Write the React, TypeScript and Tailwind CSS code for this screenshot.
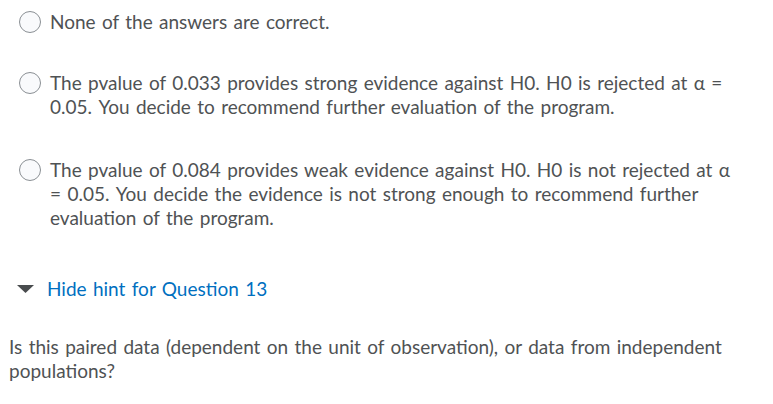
const font = { fontFamily: "Lato, 'Open Sans', sans-serif" };

function Radio() {
  return (
    <span className="mt-[1px] h-[22px] w-[22px] shrink-0 rounded-full border border-[#8a8f94] bg-[#f9fafc]" />
  );
}

function Option({ children, className = '' }: { children: React.ReactNode; className?: string }) {
  return (
    <div className={`flex items-start gap-[9px] pl-[19px] ${className}`}>
      <Radio />
      <p className="w-[685px] text-[19px] leading-[24px] text-[#4f5254] [word-spacing:1.5px]">
        {children}
      </p>
    </div>
  );
}

export default function App() {
  return (
    <div style={font} className="h-[404px] w-[773px] overflow-hidden bg-white pt-[10px]">
      <Option>None of the answers are correct.</Option>
      <Option className="mt-[37px]">
        The pvalue of 0.033 provides strong evidence against H0. H0 is rejected at α = 0.05. You
        decide to recommend further evaluation of the program.
      </Option>
      <Option className="mt-[39px]">
        The pvalue of 0.084 provides weak evidence against H0. H0 is not rejected at α = 0.05. You
        decide the evidence is not strong enough to recommend further evaluation of the program.
      </Option>

      <button className="mt-[47px] flex items-center gap-[13px] pl-[17px] text-[19px] leading-[24px] text-[#006fbf] [word-spacing:1.5px]">
        <svg width="17" height="8" viewBox="0 0 17 8">
          <path d="M0 0 H17 L8.5 8 Z" fill="#494c4e" />
        </svg>
        Hide hint for Question 13
      </button>

      <p className="mt-[34px] w-[740px] pl-[9px] text-[19px] leading-[24px] text-[#4f5254] [word-spacing:1.5px]">
        Is this paired data (dependent on the unit of observation), or data from independent
        populations?
      </p>
    </div>
  );
}
